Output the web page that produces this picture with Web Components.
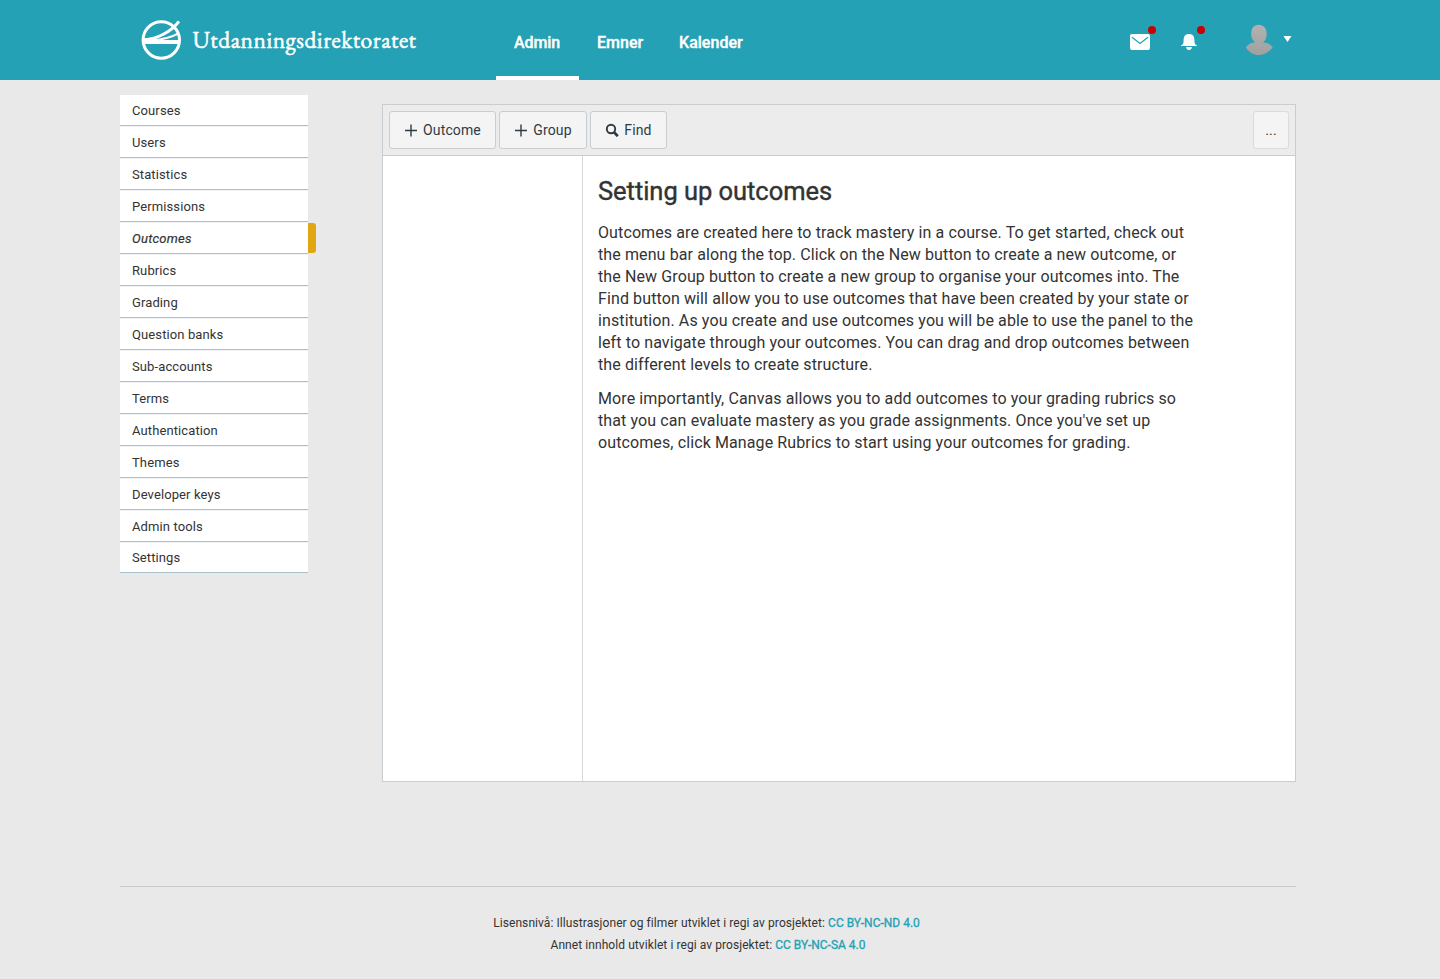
<!DOCTYPE html>
<html lang="nb">
<head>
<meta charset="utf-8">
<title>Outcomes</title>
<style>
html,body{margin:0;height:100%}
body{background:#e9e9e9;font-family:Roboto,"Liberation Sans",sans-serif;color:#333;overflow:hidden}
</style>
</head>
<body>
<admin-page></admin-page>
<script>
function define(name, html) {
  customElements.define(name, class extends HTMLElement {
    constructor() {
      super();
      const t = document.createElement('template');
      t.innerHTML = html;
      this.attachShadow({mode: 'open'}).append(t.content.cloneNode(true));
    }
  });
}

define('brand-logo', `<style>:host{display:block;width:300px;height:80px;flex:none}svg{display:block}</style>
<svg width="300" height="80" viewBox="0 0 300 80" fill="none" stroke="#fff">
<circle cx="21.3" cy="40" r="18.2" stroke-width="3"/>
<path d="M4 41.9H38.5" stroke-width="4"/>
<path d="M4 39.8C17 39 31 32 39 21.3" stroke-width="3"/>
<path d="M12 40.4C23 39.5 31 37.5 38 33.6" stroke-width="2.2"/>
<text x="52.5" y="48.3" fill="#fff" stroke="#fff" stroke-width=".55" font-family="'EB Garamond','Liberation Serif',serif" font-size="23.5" textLength="223.5" lengthAdjust="spacing">Utdanningsdirektoratet</text>
</svg>`);

define('nav-tab', `<style>:host{display:flex;box-sizing:border-box;height:80px;align-items:center;padding:9px 18px 0;border-bottom:4px solid transparent;font-size:16px;font-weight:500;color:#fff;letter-spacing:var(--ls,0);-webkit-text-stroke:.35px #fff;white-space:nowrap}:host([active]){border-bottom-color:#fff}</style><span><slot></slot></span>`);

define('alert-icon', `<style>:host{display:block;position:relative;width:26px;height:30px}
i{position:absolute;top:0;right:0;width:8px;height:8px;border-radius:50%;background:#c80000}</style><slot></slot><i></i>`);

define('site-header', `<style>:host{display:flex;height:80px;background:#24a1b4;box-sizing:border-box;padding-left:140px;position:relative}
nav{display:flex;margin-left:56px;flex:1}
.tools{display:flex;align-items:flex-start;padding-top:26px;width:310px}
svg{display:block;overflow:visible}
.user{display:flex;margin-left:39px}</style>
<brand-logo></brand-logo>
<nav><nav-tab active style="width:83px;--ls:-.1px">Admin</nav-tab><nav-tab style="width:82px;--ls:0px">Emner</nav-tab><nav-tab style="--ls:.02px">Kalender</nav-tab></nav>
<div class="tools">
<alert-icon><svg width="26" height="30" viewBox="0 0 26 30"><rect y="8" width="20" height="16" rx="2" fill="#fff"/><path d="M2 11.2L10 17.4L18 11.2" fill="none" stroke="#24a1b4" stroke-width="1.2"/></svg></alert-icon>
<alert-icon style="margin-left:23px"><svg width="26" height="30" viewBox="0 0 26 30" fill="#fff"><path d="M2 20V19.5C4 18.6 4.6 17.5 4.6 14.5C4.6 10 6.5 8 10 8S15.400 10 15.400 14.500C15.400 17.500 16 18.600 18 19.500V20Z"/><path d="M7 21H13Q12.500 23.900 10 23.900T7 21Z"/></svg></alert-icon>
<div class="user"><svg width="50" height="32" viewBox="0 0 50 32"><defs><linearGradient id="g" x2="0" y2="1"><stop stop-color="#b2b2b2"/><stop offset="1" stop-color="#a0a0a0"/></linearGradient></defs><path fill="url(#g)" d="M15-1.200C20-1.200 23 2.500 23 8C23 12 21.500 14.600 19.400 16.500C23.500 16.500 27 18.500 29 21.400C25 26 20.500 29 15 29S5.500 26 2 21.400C4 18.500 7.500 16.500 11.600 16.500C9 14.600 7.500 12 7.500 8C7.500 2.500 10-1.200 15-1.200Z" style="transform:translateX(-.3px)"/><path fill="#fff" d="M39.500 10H47.500L43.500 16Z"/></svg></div>
</div>`);

define('side-item', `<style>:host{display:flex;box-sizing:border-box;height:32px;align-items:center;background:#fff;border-top:1px solid #f3f6f8;border-bottom:1px solid #a9bfc9;padding-left:12px;font-size:13px;letter-spacing:.11px;color:#333;position:relative}
:host([first]){height:31px;border-top:0}:host([last]){height:31px}
:host([active]){font-style:italic;letter-spacing:.25px;-webkit-text-stroke:.2px #333}
:host([active])::after{content:"";position:absolute;left:100%;top:0;width:8px;height:30px;background:#e2a613;border-radius:0 3px 3px 0}</style><span><slot></slot></span>`);

define('side-menu', `<style>:host{display:block;width:188px;margin-top:15px;flex:none}</style>
<side-item first>Courses</side-item><side-item>Users</side-item><side-item>Statistics</side-item><side-item>Permissions</side-item><side-item active>Outcomes</side-item><side-item>Rubrics</side-item><side-item>Grading</side-item><side-item>Question banks</side-item><side-item>Sub-accounts</side-item><side-item>Terms</side-item><side-item>Authentication</side-item><side-item>Themes</side-item><side-item>Developer keys</side-item><side-item>Admin tools</side-item><side-item last>Settings</side-item>`);

define('tool-button', `<style>:host{display:flex;box-sizing:border-box;height:38px;align-items:center;justify-content:center;background:#f4f4f4;border:1px solid #c7cdd1;border-radius:3px;font-size:14px;color:#2d3b45;letter-spacing:.13px;white-space:nowrap;gap:5px}:host([quiet]){border-color:#d9dbdc}</style><slot name="icon"></slot><span><slot></slot></span>`);

const plus = '<svg slot="icon" width="14" height="14" viewBox="0 0 14 14"><path d="M1 7.500H13M7 1.500V13.500" stroke="#2d3b45" stroke-width="1.400" fill="none"/></svg>';
define('outcomes-panel', `<style>:host{display:flex;flex-direction:column;box-sizing:border-box;width:914px;height:678px;margin:24px 0 0 74px;border:1px solid #c7cdd1}
.bar{display:flex;gap:3px;padding:6px;box-sizing:border-box;background:#ececec;border-bottom:1px solid #c7cdd1;height:51px}
.more{margin-left:auto}
.main{display:flex;flex:1;background:#fff}
.tree{width:199px;border-right:1px solid #d5d9dc}
article{padding:0 15px;width:600px}
h2{font-size:25.500px;font-weight:400;line-height:34px;margin:18px 0 14px;letter-spacing:-.04px;-webkit-text-stroke:.4px #333}
p{font-size:16px;line-height:22px;margin:0 0 12px;letter-spacing:.11px}
svg{display:block}</style>
<div class="bar"><tool-button style="width:107px">${plus}Outcome</tool-button><tool-button style="width:88px">${plus}Group</tool-button><tool-button style="width:77px"><svg slot="icon" width="14" height="14" viewBox="0 0 14 14" fill="none" stroke="#2d3b45"><circle cx="6" cy="6" r="4.200" stroke-width="1.900"/><path d="M8.800 9L12.800 13.200" stroke-width="2.700"/></svg>Find</tool-button><tool-button quiet class="more" style="width:36px">...</tool-button></div>
<div class="main"><div class="tree"></div><article><h2>Setting up outcomes</h2>
<p>Outcomes are created here to track mastery in a course. To get started, check out the menu bar along the top. Click on the New button to create a new outcome, or the New Group button to create a new group to organise your outcomes into. The Find button will allow you to use outcomes that have been created by your state or institution. As you create and use outcomes you will be able to use the panel to the left to navigate through your outcomes. You can drag and drop outcomes between the different levels to create structure.</p>
<p>More importantly, Canvas allows you to add outcomes to your grading rubrics so that you can evaluate mastery as you grade assignments. Once you've set up outcomes, click Manage Rubrics to start using your outcomes for grading.</p></article></div>`);

define('site-footer', `<style>:host{display:block;box-sizing:border-box;width:1176px;margin:104px 0 0 120px;border-top:1px solid #c7cdd1;padding-top:25px;font-size:12px;line-height:22px;letter-spacing:.075px;text-align:center;color:#333}
div{padding-right:3px}a{color:#24a1b4;letter-spacing:0;-webkit-text-stroke:.3px #24a1b4}</style>
<div>Lisensnivå: Illustrasjoner og filmer utviklet i regi av prosjektet: <a>CC BY-NC-ND 4.0</a></div><div style="padding-right:0">Annet innhold utviklet i regi av prosjektet: <a>CC BY-NC-SA 4.0</a></div>`);

define('admin-page', `<style>:host{display:block}.body{display:flex;align-items:flex-start;padding-left:120px}</style>
<site-header></site-header><div class="body"><side-menu></side-menu><outcomes-panel></outcomes-panel></div><site-footer></site-footer>`);
</script>
</body>
</html>
